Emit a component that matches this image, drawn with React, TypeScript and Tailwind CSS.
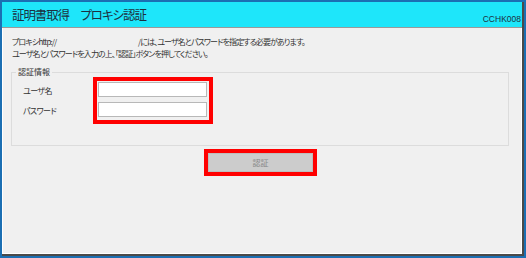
import React from 'react'

const jp = { fontFamily: '"Noto Sans CJK JP", "Noto Sans", sans-serif', fontFeatureSettings: '"palt"' }

export default function App() {
    return (
        <div className="w-[526px] h-[258px] bg-[#1b6fb3] p-[2px] pb-0 pr-0 flex flex-col" style={jp}>
            <div className="flex-1 flex flex-col border-r-2 border-b-2 border-[#4a4a4a] mb-[2px] mr-[2px]">
                <div className="h-[26px] bg-[#1ee6fa] border-b border-[#9a9a9a] flex items-end justify-between pl-[10px] pr-[1px]">
                    <span className="text-[12.5px] leading-[22px] text-[#1d3040] tracking-[-1.1px] mb-[1px]">証明書取得　プロキシ認証</span>
                    <span className="text-[8.5px] leading-[14px] text-[#1d3040] mb-[1px] whitespace-nowrap" style={{ fontFamily: '"Liberation Sans", Arial, sans-serif' }}>CCHK008</span>
                </div>
                <div className="flex-1 bg-[#f0f0f0] border-l border-r border-b border-white pt-[8px]">
                    <div className="pl-[9px] text-[8px] leading-[12px] text-[#333] tracking-[-0.9px]">
                        <div className="flex">
                            <span className="w-[126px]">プロキシhttp://</span>
                            <span>/には、ユーザ名とパスワードを指定する必要があります。</span>
                        </div>
                        <div>ユーザ名とパスワードを入力の上、「認証」ボタンを押してください。</div>
                    </div>
                    <fieldset className="ml-[8px] mt-[6px] w-[498px] h-[80px] border border-[#dcdcdc] pl-[11px]">
                        <legend className="ml-[-7px] px-[2px] text-[8px] leading-[12px] text-[#333]">認証情報</legend>
                        <div className="flex mt-[-1px]">
                            <div className="w-[70px] flex flex-col text-[8px] text-[#333] tracking-[-0.6px] pt-[7px]">
                                <span className="h-[20px] leading-[14px]">ユーザ名</span>
                                <span className="h-[20px] leading-[14px]">パスワード</span>
                            </div>
                            <div className="border-[4px] border-[#ff0000] pl-[1px] pr-[2px] py-[1px] flex flex-col gap-[5px]">
                                <input className="block w-[109px] h-[15px] bg-white border border-[#b8b8b8] outline-none" />
                                <input className="block w-[109px] h-[15px] bg-white border border-[#b8b8b8] outline-none" />
                            </div>
                        </div>
                    </fieldset>
                    <div className="flex justify-center mt-[3px] pr-[3px]">
                        <div className="flex border-[4px] border-[#ff0000]">
                            <button className="block w-[105px] h-[19px] bg-[#cccccc] border border-[#bdbdbd] text-[8px] leading-[12px] text-[#8a8a8a]">認証</button>
                        </div>
                    </div>
                </div>
            </div>
        </div>
    )
}
